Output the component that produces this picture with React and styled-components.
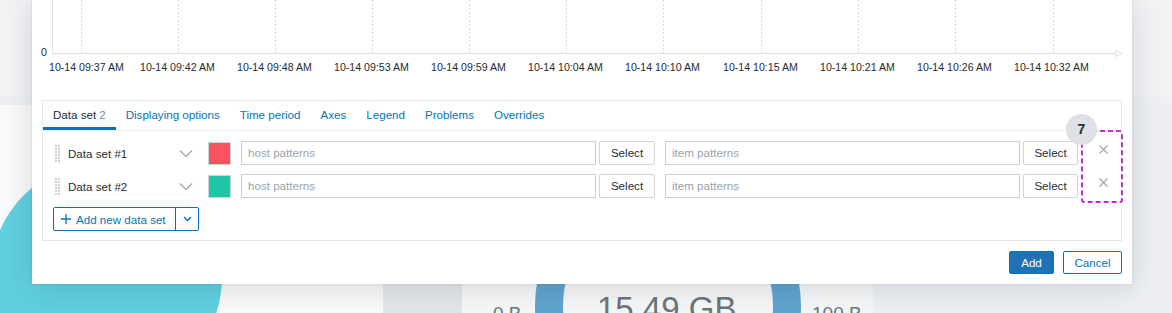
import React from "react";
import styled, { createGlobalStyle } from "styled-components";

const GlobalStyle = createGlobalStyle`
  html, body {
    margin: 0;
    padding: 0;
    background: #edeff2;
    font-family: "Liberation Sans", Arial, sans-serif;
    overflow: hidden;
  }
  * { box-sizing: border-box; }
`;

const gridX = [49, 146, 243, 340, 437, 534, 631, 729, 826, 923, 1021];
const timeLabels = [
  [17, "09:37"], [108, "09:42"], [205, "09:48"], [302, "09:53"],
  [399, "09:59"], [496, "10:04"], [593, "10:10"], [691, "10:15"],
  [788, "10:21"], [885, "10:26"], [982, "10:32"],
];

const tabs = ["Displaying options", "Time period", "Axes", "Legend", "Problems", "Overrides"];

const dataSets = [
  { name: "Data set #1", color: "#fb5262" },
  { name: "Data set #2", color: "#1dc6a6" },
];

const Stage = styled.div`
  position: relative;
  width: 1172px;
  height: 313px;
  overflow: hidden;
`;

const Dashboard = styled.div`
  display: grid;
  grid-template-columns: 383px 79px 411px 1fr;
  grid-template-rows: 97px 1fr;
  row-gap: 8px;
  height: 100%;
`;

const TopWidget = styled.div`
  grid-column: 1 / -1;
  background: #f1f2f4;
`;

const Widget = styled.div`
  background: ${(p) => p.$bg || "#f8f9fa"};
  overflow: hidden;
  grid-column: ${(p) => p.$col};
`;

const Dialog = styled.div`
  position: absolute;
  left: 32px;
  top: 0;
  width: 1100px;
  padding: 0 10px 10px;
  background: #fff;
  font-size: 11.6px;
  box-shadow: 0 4px 26px rgba(40, 50, 60, 0.16), 0 0 2px rgba(40, 50, 60, 0.12);
`;

const ChartSvg = styled.svg`
  display: block;
  margin: 0 -10px;
  font-family: "Liberation Sans", Arial, sans-serif;
  font-size: 10.6px;
  fill: #1f2c33;
`;

const Panel = styled.div`
  border: 1px solid #e3e7ea;
`;

const TabList = styled.div`
  display: flex;
  height: 30px;
  border-bottom: 1px solid #ebeef0;
`;

const Tab = styled.div`
  padding: 2px 10px 0;
  line-height: 24px;
  color: ${(p) => (p.$active ? "#1f2c33" : "#0275b8")};
  border-bottom: 3px solid ${(p) => (p.$active ? "#0275b8" : "transparent")};
  white-space: nowrap;
`;

const Count = styled.span`
  color: #768d99;
  margin-left: 3px;
`;

const Content = styled.div`
  padding: 10px 10px 9px;
  display: flex;
  flex-direction: column;
  gap: 9px;
`;

const Row = styled.div`
  display: flex;
  align-items: center;
  height: 24px;
`;

const Handle = styled.svg`
  width: 15px;
  height: 17px;
  flex: none;
  fill: #cad0d5;
`;

const SetName = styled.div`
  width: 111px;
  color: #1f2c33;
`;

const Chevron = styled.svg`
  width: 14px;
  height: 9px;
  margin-right: 15px;
  flex: none;
`;

const Swatch = styled.div`
  width: 23px;
  height: 23px;
  margin-right: 10px;
  background: ${(p) => p.$color};
  border: 1px solid #cfd4d8;
  flex: none;
`;

const Input = styled.div`
  width: 355px;
  height: 24px;
  border: 1px solid #c9d0d4;
  padding: 0 6px;
  line-height: 22px;
  color: #9aa3a9;
  margin-right: 3px;
`;

const SelectButton = styled.div`
  width: ${(p) => p.$w}px;
  height: 24px;
  border: 1px solid #cfd5d9;
  border-radius: 2px;
  line-height: 22px;
  text-align: center;
  color: #1f2c33;
  background: #fff;
  margin-right: ${(p) => p.$mr || 0}px;
`;

const Remove = styled.svg`
  width: 9px;
  height: 9px;
  margin: -7px 0 0 21px;
  stroke: #a3abb1;
  stroke-width: 1.2;
`;

const SplitButton = styled.div`
  display: flex;
  width: 146px;
  height: 24px;
  border: 1px solid #0275b8;
  border-radius: 2px;
  color: #0275b8;
`;

const SplitMain = styled.div`
  display: flex;
  align-items: center;
  gap: 5px;
  padding-left: 7px;
  width: 122px;
  border-right: 1px solid #0275b8;
`;

const SplitArrow = styled.div`
  flex: 1;
  display: flex;
  align-items: center;
  justify-content: center;
`;

const Footer = styled.div`
  display: flex;
  justify-content: flex-end;
  gap: 9px;
  margin-top: 10px;
`;

const Button = styled.div`
  width: ${(p) => p.$w}px;
  height: 23px;
  border: 1px solid #0275b8;
  border-radius: 2px;
  background: ${(p) => (p.$primary ? "#1f72b6" : "#fff")};
  color: ${(p) => (p.$primary ? "#fff" : "#0275b8")};
  line-height: 21px;
  text-align: center;
`;

const Highlight = styled.svg`
  position: absolute;
  left: 1081px;
  top: 130px;
`;

const Badge = styled.div`
  position: absolute;
  left: 1066px;
  top: 114px;
  width: 31px;
  height: 31px;
  border-radius: 50%;
  background: #dfe0e5;
  color: #2a2f35;
  font-size: 14px;
  font-weight: bold;
  line-height: 31px;
  text-align: center;
`;

const GaugeSvg = styled.svg`
  display: block;
  font-family: "Liberation Sans", Arial, sans-serif;
  fill: #6d757a;
`;

const DataSetRow = ({ name, color }) => (
  <Row>
    <Handle viewBox="0 0 15 17">
      {[0, 3, 6, 9, 12, 15].map((y) => (
        <g key={y}>
          <rect x="2" y={y} width="2" height="2" />
          <rect x="5" y={y} width="2" height="2" />
        </g>
      ))}
    </Handle>
    <SetName>{name}</SetName>
    <Chevron viewBox="0 0 14 9">
      <polyline points="1,1.5 7,7.5 13,1.5" fill="none" stroke="#a4acb2" strokeWidth="1.4" />
    </Chevron>
    <Swatch $color={color} />
    <Input>host patterns</Input>
    <SelectButton $w={56} $mr={10}>Select</SelectButton>
    <Input>item patterns</Input>
    <SelectButton $w={55}>Select</SelectButton>
    <Remove viewBox="0 0 9 9">
      <line x1="0.5" y1="0.5" x2="8.5" y2="8.5" />
      <line x1="8.5" y1="0.5" x2="0.5" y2="8.5" />
    </Remove>
  </Row>
);

const App = () => (
  <>
    <GlobalStyle />
    <Stage>
      <Dashboard>
        <TopWidget />
        <Widget $col={1}>
          <svg width="383" height="208">
            <circle cx="106" cy="172" r="116" fill="#60cfe0" />
          </svg>
        </Widget>
        <Widget $col={2} $bg="#e3e6e9" />
        <Widget $col={3} $bg="#f5f6f7">
          <GaugeSvg width="411" height="208">
            <circle cx="206" cy="201" r="119" fill="none" stroke="#5fa3cc" strokeWidth="28" />
            <text x="31" y="215" fontSize="19">0 B</text>
            <text x="135" y="215" fontSize="33">15.49 GB</text>
            <text x="350" y="215" fontSize="19">100 B</text>
          </GaugeSvg>
        </Widget>
      </Dashboard>

      <Dialog>
        <ChartSvg width="1100" height="100">
          {gridX.map((x) => (
            <line key={x} x1={x + 0.5} x2={x + 0.5} y1="0" y2="53" stroke="#d6dade" strokeDasharray="2 2" />
          ))}
          <line x1="20.5" y1="0" x2="20.5" y2="54" stroke="#dce0e4" />
          <line x1="20" y1="53.5" x2="1084" y2="53.5" stroke="#dce0e4" />
          <path d="M1084 50.5 L1090 53.5 L1084 56.5 Z" fill="none" stroke="#dce0e4" />
          <text x="15" y="56" textAnchor="end">0</text>
          {timeLabels.map(([x, t]) => (
            <text key={t} x={x} y="71">{`10-14 ${t} AM`}</text>
          ))}
        </ChartSvg>

        <Panel>
          <TabList>
            <Tab $active>
              Data set<Count>2</Count>
            </Tab>
            {tabs.map((t) => (
              <Tab key={t}>{t}</Tab>
            ))}
          </TabList>
          <Content>
            {dataSets.map((d) => (
              <DataSetRow key={d.name} {...d} />
            ))}
            <SplitButton>
              <SplitMain>
                <svg width="10" height="10" viewBox="0 0 10 10">
                  <path d="M5 0 V10 M0 5 H10" stroke="#0275b8" strokeWidth="1.3" />
                </svg>
                Add new data set
              </SplitMain>
              <SplitArrow>
                <svg width="9" height="6" viewBox="0 0 9 6">
                  <polyline points="1,1 4.5,4.5 8,1" fill="none" stroke="#0275b8" strokeWidth="1.4" />
                </svg>
              </SplitArrow>
            </SplitButton>
          </Content>
        </Panel>

        <Footer>
          <Button $w={45} $primary>Add</Button>
          <Button $w={59}>Cancel</Button>
        </Footer>
      </Dialog>

      <Highlight width="42" height="73">
        <rect x="1" y="1" width="40" height="71" rx="2" fill="none" stroke="#c22fd1" strokeWidth="2" strokeDasharray="5 3" />
      </Highlight>
      <Badge>7</Badge>
    </Stage>
  </>
);

export default App;
